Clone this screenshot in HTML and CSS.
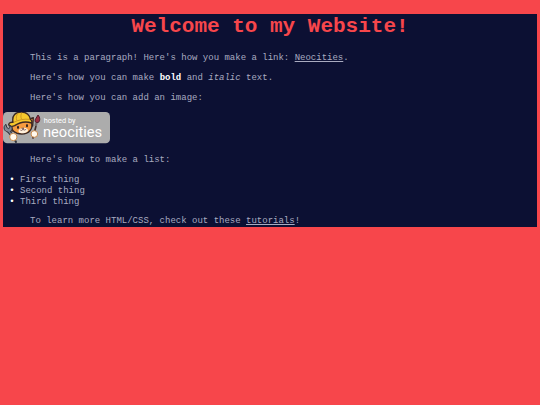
FILE: index.html
```html
<!DOCTYPE html>
<html lang="en">
<head>
<meta charset="UTF-8">
<meta name="viewport" content="width=device-width, initial-scale=1">
<title>Welcome to my Website!</title>
<link rel="stylesheet" href="styles.css">
</head>
<body>
<main class="page">
  <h1>Welcome to my Website!</h1>
  <p>This is a paragraph! Here's how you make a link: <a href="https://neocities.org">Neocities</a>.</p>
  <p>Here's how you can make <strong>bold</strong> and <em>italic</em> text.</p>
  <p>Here's how you can add an image:</p>
  <svg class="badge" viewBox="9 12 321 96" role="img" aria-label="hosted by neocities">
    <rect x="9" y="12" width="321" height="94" rx="13" fill="#acacac"/>
    <!-- cat with hard hat -->
    <g stroke="#3b2924" stroke-width="4" stroke-linejoin="round" stroke-linecap="round">
      <path d="M34 49 L29 68 L46 70 Z" fill="#f49a3c"/>
      <path d="M79 36 L100 29 L98 54 Z" fill="#f49a3c"/>
      <path d="M35 49 C32 68 46 78 65 78 C87 78 101 62 94 41 L64 34 Z" fill="#f69b3f"/>
      <path d="M39 43 C35 22 47 12 64 12 C80 12 90 22 91 34 C95 37 97 41 95 45 C80 40 61 41 44 53 C36 57 27 55 26 50 C27 44 33 42 39 43 Z" fill="#f6c72d"/>
      <path d="M43 42 C57 35 74 32 88 34 M52 18 C49 22 48 30 50 36 M65 14 C62 20 62 27 64 32" fill="none" stroke="#b77d1c" stroke-width="2"/>
    </g>
    <path d="M56 67 C60 59 75 57 82 63 C88 70 78 76 66 76 C58 76 54 72 56 67 Z" fill="#fff0dc"/>
    <ellipse cx="54" cy="58" rx="3" ry="5" fill="#30201e"/>
    <ellipse cx="81" cy="53" rx="3" ry="5" fill="#30201e"/>
    <path d="M65 61 L72 60 L69 64 Z M69 64 C67 68 63 68 61 66 M69 64 C73 68 77 66 78 63" fill="none" stroke="#552e29" stroke-width="2"/>
    <!-- wrench -->
    <path d="M22 65 L37 83" stroke="#30323b" stroke-width="10"/>
    <path d="M18 49 L20 58 L26 62 L31 57 L28 51 C36 53 39 62 34 68 C28 75 16 72 13 64 C11 58 13 52 18 49 Z" fill="#808895" stroke="#30323b" stroke-width="3"/>
    <path d="M23 66 L37 83" stroke="#808895" stroke-width="4"/>
    <path d="M45 97 L48 102" stroke="#30323b" stroke-width="6" stroke-linecap="round"/>
    <!-- brush -->
    <path d="M109 50 L99 90" stroke="#432c29" stroke-width="5" stroke-linecap="round"/>
    <path d="M110 40 L107 54" stroke="#77706f" stroke-width="7"/>
    <path d="M114 21 C121 29 121 39 114 44 C105 44 103 38 108 31 Z" fill="#9d2d42" stroke="#4f1c2b" stroke-width="3"/>
    <!-- paws -->
    <circle cx="40" cy="87" r="11" fill="#fff9ed" stroke="#c98b4e" stroke-width="3"/>
    <circle cx="103" cy="78" r="10" fill="#fff9ed" stroke="#c98b4e" stroke-width="3"/>
    <text class="badge-small" x="131" y="46">hosted by</text>
    <text class="badge-large" x="129" y="87">neocities</text>
  </svg>
  <p>Here's how to make a list:</p>
  <ul>
    <li>First thing</li>
    <li>Second thing</li>
    <li>Third thing</li>
  </ul>
  <p>To learn more HTML/CSS, check out these <a href="https://neocities.org/tutorials">tutorials</a>!</p>
</main>
</body>
</html>
```
FILE: styles.css
```css
body {
  margin: 14px 3px;
  background: #f7464b;
  color: #a9abc0;
  font: 9px/11px "Courier New", "Liberation Mono", monospace;
}

.page {
  padding-top: 1px;
  background: #0c1033;
}

h1 {
  margin: 0 0 14px;
  color: #f7464b;
  font-size: 21px;
  line-height: 24px;
  text-align: center;
}

p {
  margin: 0 27px 9px;
}

p:last-child {
  margin-bottom: 0;
}

a {
  color: inherit;
}

strong {
  color: #fff;
}

.badge {
  display: block;
  width: 107px;
  height: 32px;
  margin: -1px 0 11px;
}

.badge-small,
.badge-large {
  fill: #fff;
  font-family: Roboto, sans-serif;
}

.badge-small {
  font-size: 22px;
}

.badge-large {
  font-size: 44px;
}

ul {
  margin: 0 0 8px;
  padding-left: 17px;
}

li::marker {
  color: #fff;
  content: "• ";
}
```
